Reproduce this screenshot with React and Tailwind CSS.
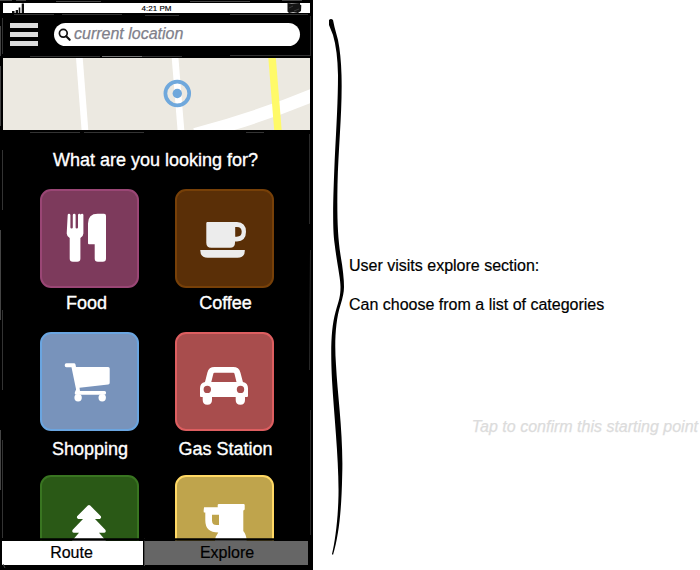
import React from "react";

const FONT = "font-['Liberation_Sans',Arial,sans-serif]";

function FoodIcon() {
  return (
    <g fill="#fff" transform="translate(.7 0)">
      <path d="M27 26q0-1.3 1.300-1.300t1.400 1.300v12.500q0 1 1.200 1t1.200-1V26q0-1.300 1.400-1.300t1.400 1.300v12.500q0 1 1.200 1t1.200-1V26q0-1.300 1.400-1.300t1.400 1.300v0q0-1.300 1.300-1.300t1.300 1.300v18.500q0 2.500-3 4.500V69.500q0 3.200-3.200 3.200h-4.300q-3.200 0-3.200-3.200V49q-3-2-3-4.500z" />
      <path d="M57 24.700h6.300q2 0 2 2V69.500q0 3.200-3.200 3.200H57.200q-3.200 0-3.200-3.200V55.300h-5.700q-1 0-1-1V34.500q0-9.800 9.700-9.800z" />
    </g>
  );
}

function CoffeeIcon() {
  return (
    <g fill="#ececec">
      <path fillRule="evenodd" d="M32.500 33H62q9 .5 9 9.700T62 52.400h-2v1.300q0 5-5 5H36.300q-5 0-5-5V34.200q0-1.200 1.200-1.200zM60.200 38v9.700h1.600q4.900 0 4.900-4.900T61.800 38z" />
      <path d="M25.300 61h44.500q.4 7.700-7.300 7.700H32.700q-7.700 0-7.400-7.700z" />
    </g>
  );
}

function CartIcon() {
  return (
    <g fill="#fff" transform="translate(.7 0)">
      <path d="M25.700 31.300h7.600q1.200 0 1.500 1.300l.5 2.400h32.200q1.500 0 1.500 1.500v14.200q0 1.500-1.500 1.800l-28.700 3.300.5 3.200h24.500q1.600 0 1.600 1.800t-1.600 1.900H35.700q-1.700 0-1.700-1.500 0-1 1.400-3.800l-4.600-22.100h-5.100q-1.700 0-1.700-2t1.700-2z" />
      <circle cx="37.400" cy="65.800" r="3.700" />
      <circle cx="61.500" cy="65.800" r="3.700" />
    </g>
  );
}

function CarIcon() {
  return (
    <path
      fill="#fff"
      fillRule="evenodd"
      d="M39.500 35h18.700q5.800 0 7.200 5.400l2.500 9.600q5.100 1 5.100 6.300V64q0 1-1 1h-2v3q0 4.700-4.650 4.700T60.700 68v-3H37v3q0 4.700-4.650 4.700T27.700 68v-3H26q-1 0-1-1v-7.700q0-5.300 5-6.300l2.400-9.600q1.400-5.400 7.100-5.400zM39.500 40.700q-.9 0-1.100.8L36.300 50h25.200l-2.100-8.500q-.2-.8-1.100-.8zM32.300 53.700a3.700 3.700 0 1 0 0 7.400 3.700 3.700 0 0 0 0-7.400zM65.500 53.700a3.700 3.700 0 1 0 0 7.400 3.700 3.700 0 0 0 0-7.400z"
    />
  );
}

function TreeIcon() {
  return (
    <path
      fill="#fff"
      d="M47.800 30.600q1.200-1 2.400 0l10.700 10.600q.8 2.100-1.200 2.800H55l10.300 10.800q1.300 2.200-1 3h-5.300L67 67v12H31V67l8-9.200h-5.300q-2.300-.8-1-3L43 44h-4.700q-2-.7-1.200-2.800z"
    />
  );
}

function MugIcon() {
  return (
    <path
      fill="#fff"
      fillRule="evenodd"
      d="M43.500 29H69l.7.700v4.600q0 .7-.9.900l-.5.300v20.500q3.400 4 3.400 10.500v10H40V66.500q0-5 3.300-9-13 0-13-12V37.500h-1.400q-.6-1 .2-5.200h13.600V29.700zM37 39.700V45.500q0 4.500 4.500 4.500H44V39.700z"
    />
  );
}

const CATEGORIES = [
  { name: "Food", Icon: FoodIcon, tone: "bg-[#7d3a5c] border-[#9a4675]", label: "mt-[5px] mr-[6px]" },
  { name: "Coffee", Icon: CoffeeIcon, tone: "bg-[#5a2f07] border-[#774008]", label: "mt-[5px] ml-[2px]" },
  { name: "Shopping", Icon: CartIcon, tone: "bg-[#7893bb] border-[#6aa5e0]", label: "mt-[8px] ml-px" },
  { name: "Gas Station", Icon: CarIcon, tone: "bg-[#a84d4d] border-[#dd5e60]", label: "mt-[8px] ml-[2px]" },
  { Icon: TreeIcon, tone: "bg-[#2a5916] border-[#397521]" },
  { Icon: MugIcon, tone: "bg-[#bfa44c] border-[#ffd864]" },
];

function Category({ name, Icon, tone, label }) {
  return (
    <div className="flex h-[143px] w-[99px] flex-col items-center">
      <div className={`h-[99px] w-[99px] shrink-0 rounded-[11px] border-2 ${tone}`}>
        <svg viewBox="0 0 99 99" className="-m-[2px] h-[99px] w-[99px] max-w-none" aria-hidden="true">
          <Icon />
        </svg>
      </div>
      {name && (
        <span className={`text-[18px] leading-[20px] whitespace-nowrap text-white [-webkit-text-stroke:0.35px_white] ${label}`}>
          {name}
        </span>
      )}
    </div>
  );
}

function StatusBar() {
  return (
    <div className="mx-[3px] mt-[3px] flex h-[10px] shrink-0 items-center justify-between bg-white">
      <svg viewBox="0 0 30 10" className="h-[10px] w-[30px]" aria-hidden="true">
        <path d="M9 8h2.500v2H9zM12.700 7h2.300v3h-2.300zM15.700 4.500h1.600V10h-1.600zM18.700.500h2.300V10h-2.300z" fill="#111" />
      </svg>
      <span className="mt-px text-[8px] leading-[10px] text-black [-webkit-text-stroke:0.15px_black]">4:21 PM</span>
      <svg viewBox="0 0 30 10" className="h-[10px] w-[30px]" aria-hidden="true">
        <path d="M7.500 0l4 .6L20 0v1.500l1.300.7-.3 5.800-3 2-5-.8-4 .8-1.500-1.500z" fill="#151515" />
        <path d="M9 5l4-2M14 8l5-2" stroke="#555" strokeWidth=".6" />
      </svg>
    </div>
  );
}

function SearchHeader() {
  return (
    <div className="flex h-[45px] shrink-0 items-start pt-[10px] pl-[10px]">
      <div className="flex w-[28px] flex-col gap-[4px]">
        <div className="h-[5px] bg-[#dcdcdc]" />
        <div className="h-[5px] bg-[#dcdcdc]" />
        <div className="h-[5px] bg-[#dcdcdc]" />
      </div>
      <div className="ml-[16px] flex h-[23px] w-[246px] items-center rounded-[14px] bg-white pl-[4px]">
        <svg viewBox="0 0 14 14" className="mt-px h-[14px] w-[14px]" fill="none" stroke="#111" aria-hidden="true">
          <circle cx="5.300" cy="5.300" r="3.900" strokeWidth="1.700" />
          <path d="M8.200 8.200l3.500 3.600" strokeWidth="2.100" strokeLinecap="round" />
        </svg>
        <span className="-mt-[2px] ml-[2px] text-[16px] leading-[20px] text-[#80808a] italic [-webkit-text-stroke:0.25px_#80808a]">
          current location
        </span>
      </div>
    </div>
  );
}

function MapStrip() {
  return (
    <svg viewBox="0 0 307 72" className="mx-[3px] block h-[72px] w-[307px] shrink-0" aria-hidden="true">
      <rect width="307" height="72" fill="#ece9e1" />
      <g stroke="#fff" fill="none">
        <path d="M76.300-1L82 73" strokeWidth="6.700" />
        <path d="M172-1L178 73" strokeWidth="6.700" />
        <path d="M192 76.500Q256 59.500 310 37" strokeWidth="13" />
      </g>
      <path d="M269-1L275 73" stroke="#fffa69" strokeWidth="7.500" fill="none" />
      <circle cx="174.300" cy="35.500" r="11.900" fill="none" stroke="#6fa8dc" strokeWidth="3.700" />
      <circle cx="174.300" cy="35.500" r="4.700" fill="#6fa8dc" />
    </svg>
  );
}

function FrameStrokes() {
  return (
    <svg
      viewBox="0 0 314 570"
      className="pointer-events-none absolute inset-0 h-[570px] w-[314px] max-w-none"
      fill="none"
      stroke="#444"
      strokeWidth="1"
      aria-hidden="true"
    >
      <path d="M0 .5h12M16 .5h10M56 1.500h45M190 1.500h60M282 .5h20" />
      <path d="M14 14.500h40M62 14.500h60M145 15.500h34M230 14.500h78" stroke="#333" />
      <path d="M30 56.500h70M142 56.500h40M230 55.500h80" stroke="#333" />
      <path d="M102 56.500h40" stroke="#777" />
      <path d="M2.500 18v36M2.500 150v60M2.500 310v80M2.500 440v98" stroke="#333" />
      <path d="M310.500 16v40M309.500 134v90M310.500 250l-1 120M310.500 410v125" stroke="#2a2a2a" />
      <path d="M30 132.500h50M84 132.500h60M246 132.500h18" stroke="#333" />
      <path d="M0 26v30M0 66v60M0 230v90M0 430v60" stroke="#888" />
      <path d="M3 564l2 4M144.500 538v28" stroke="#444" />
      <path d="M39 539.500h236" stroke="#000" strokeWidth="2.500" />
    </svg>
  );
}

function Phone() {
  return (
    <div className="relative flex h-[570px] w-[313px] shrink-0 flex-col overflow-hidden bg-black">
      <StatusBar />
      <SearchHeader />
      <MapStrip />
      <div className="flex min-h-0 flex-1 flex-col overflow-hidden">
        <h1 className="mt-[20px] mr-[2px] text-center text-[18px] leading-[20px] whitespace-nowrap text-white [-webkit-text-stroke:0.35px_white]">
          What are you looking for?
        </h1>
        <div className="mt-[19px] ml-[40px] grid grid-cols-[99px_99px] gap-x-[36px]">
          {CATEGORIES.map((c, i) => (
            <Category key={i} {...c} />
          ))}
        </div>
      </div>
      <div className="mb-[5px] ml-[2px] flex h-[24px] w-[306px] shrink-0 gap-[2px] text-[16px] leading-[24px] [-webkit-text-stroke:0.2px_black]">
        <div className="w-[141px] bg-white text-center text-black">
          <span className="mr-[2px]">Route</span>
        </div>
        <div className="flex-1 bg-[#666] text-center text-black">
          <span className="ml-px">Explore</span>
        </div>
      </div>
      <FrameStrokes />
    </div>
  );
}

function Brace() {
  return (
    <svg viewBox="0 0 35 570" className="h-[570px] w-[35px] shrink-0" aria-hidden="true">
      <path
        fill="#000"
        d="M16 20Q18 18 20 20L21.500 27 25 40Q28 55 28.500 75C29.500 110 25.500 145 24.500 185 24 215 24.500 235 27.500 255Q31 275 31 287 31 294 27.500 305C22 322 21.500 345 23 365 24.500 395 30.500 435 29.200 475 28.500 510 26 535 20 555L19 554C22 542 25 520 25.500 495 26 460 21 415 19 380 17.500 350 18 328 22.500 312 26 300 27.500 296 27.500 287 27.500 278 24 264 21.500 243 19 225 20.500 190 21.700 160 23.500 125 25 100 25 75Q24.500 50 20 35L16 25Z"
      />
    </svg>
  );
}

export default function App() {
  return (
    <div className={`flex h-[570px] w-[700px] overflow-hidden bg-white ${FONT}`}>
      <Phone />
      <Brace />
      <div className="flex flex-1 flex-col pt-[256px] pl-px text-[16px] leading-[20px] whitespace-nowrap text-black">
        <p className="[-webkit-text-stroke:0.2px_black]">User visits explore section:</p>
        <p className="mt-[19px] [-webkit-text-stroke:0.2px_black]">Can choose from a list of categories</p>
        <p className="mt-[102px] mr-[2px] self-end text-[#dcdcdc] italic [-webkit-text-stroke:0.25px_#dcdcdc]">
          Tap to confirm this starting point
        </p>
      </div>
    </div>
  );
}
